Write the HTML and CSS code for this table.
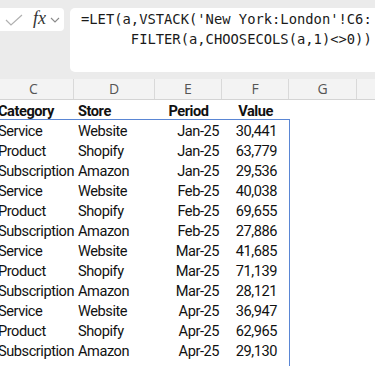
FILE: index.html
```html
<!DOCTYPE html>
<html>
<head>
<meta charset="utf-8">
<link rel="stylesheet" href="styles.css">
</head>
<body>
<div class="topbar">
  <div class="namebox">
    <svg class="check" width="18" height="12" viewBox="0 0 18 12"><path d="M1 6 L6 11 L17 1" fill="none" stroke="#b0b0b0" stroke-width="1.2"/></svg>
    <span class="fx">fx</span>
    <svg class="chev" width="10" height="6" viewBox="0 0 10 6"><path d="M1 1 L5 5 L9 1" fill="none" stroke="#8a8a8a" stroke-width="1.1"/></svg>
  </div>
  <div class="formula">
    <div class="fline">=LET(a,VSTACK('New York:London'!C6:</div>
    <div class="fline">      FILTER(a,CHOOSECOLS(a,1)&lt;&gt;0))</div>
  </div>
</div>
<div class="sheet">
  <div class="colheads">
    <div class="ch c1">C</div>
    <div class="ch c2">D</div>
    <div class="ch c3">E</div>
    <div class="ch c4">F</div>
    <div class="ch c5">G</div>
    <div class="ch c6"></div>
  </div>
  <div class="tbl">
    <div class="row head">
      <div class="l">Category</div><div class="l">Store</div><div class="ctr">Period</div><div class="ctr">Value</div>
    </div>
    <div class="body">
      <div class="row"><div class="l">Service</div><div class="l">Website</div><div class="r">Jan-25</div><div class="r v">30,441</div></div>
      <div class="row"><div class="l">Product</div><div class="l">Shopify</div><div class="r">Jan-25</div><div class="r v">63,779</div></div>
      <div class="row"><div class="l">Subscription</div><div class="l">Amazon</div><div class="r">Jan-25</div><div class="r v">29,536</div></div>
      <div class="row"><div class="l">Service</div><div class="l">Website</div><div class="r">Feb-25</div><div class="r v">40,038</div></div>
      <div class="row"><div class="l">Product</div><div class="l">Shopify</div><div class="r">Feb-25</div><div class="r v">69,655</div></div>
      <div class="row"><div class="l">Subscription</div><div class="l">Amazon</div><div class="r">Feb-25</div><div class="r v">27,886</div></div>
      <div class="row"><div class="l">Service</div><div class="l">Website</div><div class="r">Mar-25</div><div class="r v">41,685</div></div>
      <div class="row"><div class="l">Product</div><div class="l">Shopify</div><div class="r">Mar-25</div><div class="r v">71,139</div></div>
      <div class="row"><div class="l">Subscription</div><div class="l">Amazon</div><div class="r">Mar-25</div><div class="r v">28,121</div></div>
      <div class="row"><div class="l">Service</div><div class="l">Website</div><div class="r">Apr-25</div><div class="r v">36,947</div></div>
      <div class="row"><div class="l">Product</div><div class="l">Shopify</div><div class="r">Apr-25</div><div class="r v">62,965</div></div>
      <div class="row"><div class="l">Subscription</div><div class="l">Amazon</div><div class="r">Apr-25</div><div class="r v">29,130</div></div>
      <div class="row"><div class="l"></div><div class="l"></div><div class="r"></div><div class="r v"></div></div>
    </div>
  </div>
</div>
</body>
</html>
```

FILE: styles.css
```css
html, body {
  margin: 0;
  padding: 0;
  background: #ffffff;
  overflow: hidden;
  width: 375px;
  height: 366px;
}
.topbar {
  background: #ebebeb;
  height: 79px;
  box-sizing: border-box;
  padding-top: 8px;
  display: flex;
  align-items: flex-start;
}
.namebox {
  width: 64px;
  height: 23px;
  background: #ffffff;
  border-radius: 0 4px 4px 0;
  display: flex;
  align-items: center;
  flex-shrink: 0;
}
.check {
  margin-left: 5px;
}
.fx {
  font-family: "Liberation Serif", serif;
  font-style: italic;
  font-size: 18px;
  color: #333;
  margin-left: 10px;
  margin-top: -2px;
}
.chev {
  margin-left: 4px;
}
.formula {
  margin-left: 6px;
  width: 320px;
  flex-shrink: 0;
  height: 64px;
  background: #ffffff;
  border-radius: 5px;
  box-sizing: border-box;
  padding: 1px 0 0 11px;
  overflow: hidden;
}
.fline {
  font-family: "DejaVu Sans Mono", monospace;
  font-size: 13.8px;
  line-height: 20px;
  color: #1a1a1a;
  white-space: pre;
}
.sheet {
  margin-left: -6px;
}
.colheads {
  display: flex;
  height: 20px;
  background: #f3f3f3;
  border-bottom: 1px solid #d4d4d4;
}
.ch {
  box-sizing: border-box;
  border-right: 1px solid #d9d9d9;
  font-family: "Open Sans", sans-serif;
  font-size: 14px;
  color: #555;
  text-align: center;
  line-height: 20px;
  flex-shrink: 0;
}
.c1 { width: 80px; }
.c2 { width: 81px; }
.c3 { width: 67px; }
.c4 { width: 67px; }
.c5 { width: 68px; }
.c6 { width: 60px; }
.tbl {
  width: 296px;
}
.row {
  display: grid;
  grid-template-columns: 80px 81px 67px 67px;
  height: 20px;
  font-family: Roboto, sans-serif;
  font-size: 14.6px;
  letter-spacing: -0.45px;
  line-height: 23px;
  color: #111;
}
.row > div {
  white-space: nowrap;
  overflow: visible;
}
.head {
  font-weight: bold;
  height: 19px;
  line-height: 22px;
  border-bottom: 1px solid #5a86d4;
}
.body {
  width: 295px;
  border-right: 1px solid #5a86d4;
}
.l { padding-left: 4px; }
.r { text-align: right; padding-right: 3px; }
.r.v { padding-right: 12px; }
.ctr { text-align: center; }
```
